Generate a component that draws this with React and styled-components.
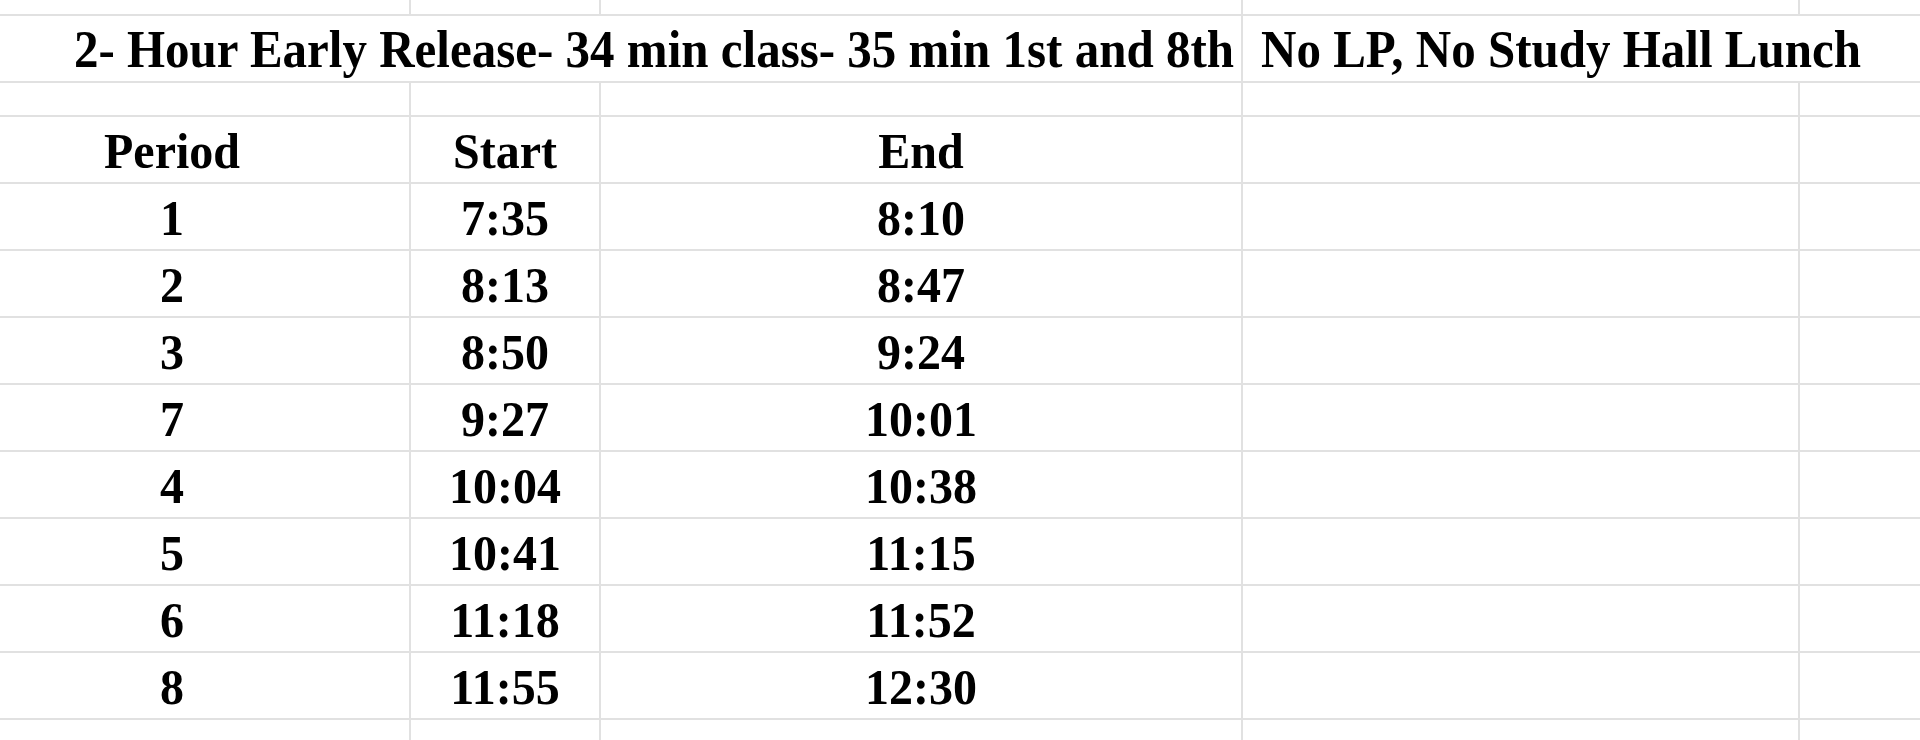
import React from "react";
import styled, { createGlobalStyle } from "styled-components";

const GlobalStyle = createGlobalStyle`
  html, body {
    margin: 0;
    padding: 0;
    background: #ffffff;
  }
`;

const schedule = [
  { period: "1", start: "7:35", end: "8:10" },
  { period: "2", start: "8:13", end: "8:47" },
  { period: "3", start: "8:50", end: "9:24" },
  { period: "7", start: "9:27", end: "10:01" },
  { period: "4", start: "10:04", end: "10:38" },
  { period: "5", start: "10:41", end: "11:15" },
  { period: "6", start: "11:18", end: "11:52" },
  { period: "8", start: "11:55", end: "12:30" },
];

const EmptyRow = () => (
  <>
    <Cell />
    <Cell />
    <Cell />
    <Cell />
    <Cell />
  </>
);

const App = () => {
  return (
    <>
      <GlobalStyle />
      <Sheet>
        {/* partial row at the top */}
        <EmptyRow />

        {/* title row, merged cells */}
        <Cell $span={3} $align="flex-end" $pr={7}>
          <Text $size={49}>2- Hour Early Release- 34 min class- 35 min 1st and 8th</Text>
        </Cell>
        <Cell $span={2} $align="flex-start" $pl={18}>
          <Text $size={49}>No LP, No Study Hall Lunch</Text>
        </Cell>

        {/* blank spacer row */}
        <EmptyRow />

        <Cell $pr={65}>
          <Text>Period</Text>
        </Cell>
        <Cell>
          <Text>Start</Text>
        </Cell>
        <Cell>
          <Text>End</Text>
        </Cell>
        <Cell />
        <Cell />

        {schedule.map((row) => (
          <React.Fragment key={row.period}>
            <Cell $pr={65}>
              <Text>{row.period}</Text>
            </Cell>
            <Cell>
              <Text>{row.start}</Text>
            </Cell>
            <Cell>
              <Text>{row.end}</Text>
            </Cell>
            <Cell />
            <Cell />
          </React.Fragment>
        ))}

        {/* partial row at the bottom */}
        <EmptyRow />
      </Sheet>
    </>
  );
};

export default App;

const Sheet = styled.div`
  width: 1920px;
  height: 740px;
  overflow: hidden;
  display: grid;
  grid-template-columns: 409px 188px 640px 555px 1fr;
  grid-template-rows: 14px 65px 32px repeat(9, 65px) 1fr;
  gap: 2px;
  background: #e1e1e1;
`;

const Cell = styled.div`
  background: #ffffff;
  grid-column: span ${({ $span }) => $span || 1};
  display: flex;
  align-items: flex-end;
  justify-content: ${({ $align }) => $align || "center"};
  padding: 0 ${({ $pr }) => $pr || 0}px 6px ${({ $pl }) => $pl || 0}px;
  overflow: visible;
  min-width: 0;
`;

// the reference glyphs sit a little taller than Liberation Serif, so stretch upward from the baseline
const Text = styled.span`
  display: inline-block;
  font-family: "Liberation Serif", "Times New Roman", serif;
  font-weight: 700;
  font-size: ${({ $size }) => $size || 48}px;
  line-height: 1;
  color: #000000;
  white-space: nowrap;
  transform: scaleY(1.07);
  transform-origin: 50% 84%;
`;
